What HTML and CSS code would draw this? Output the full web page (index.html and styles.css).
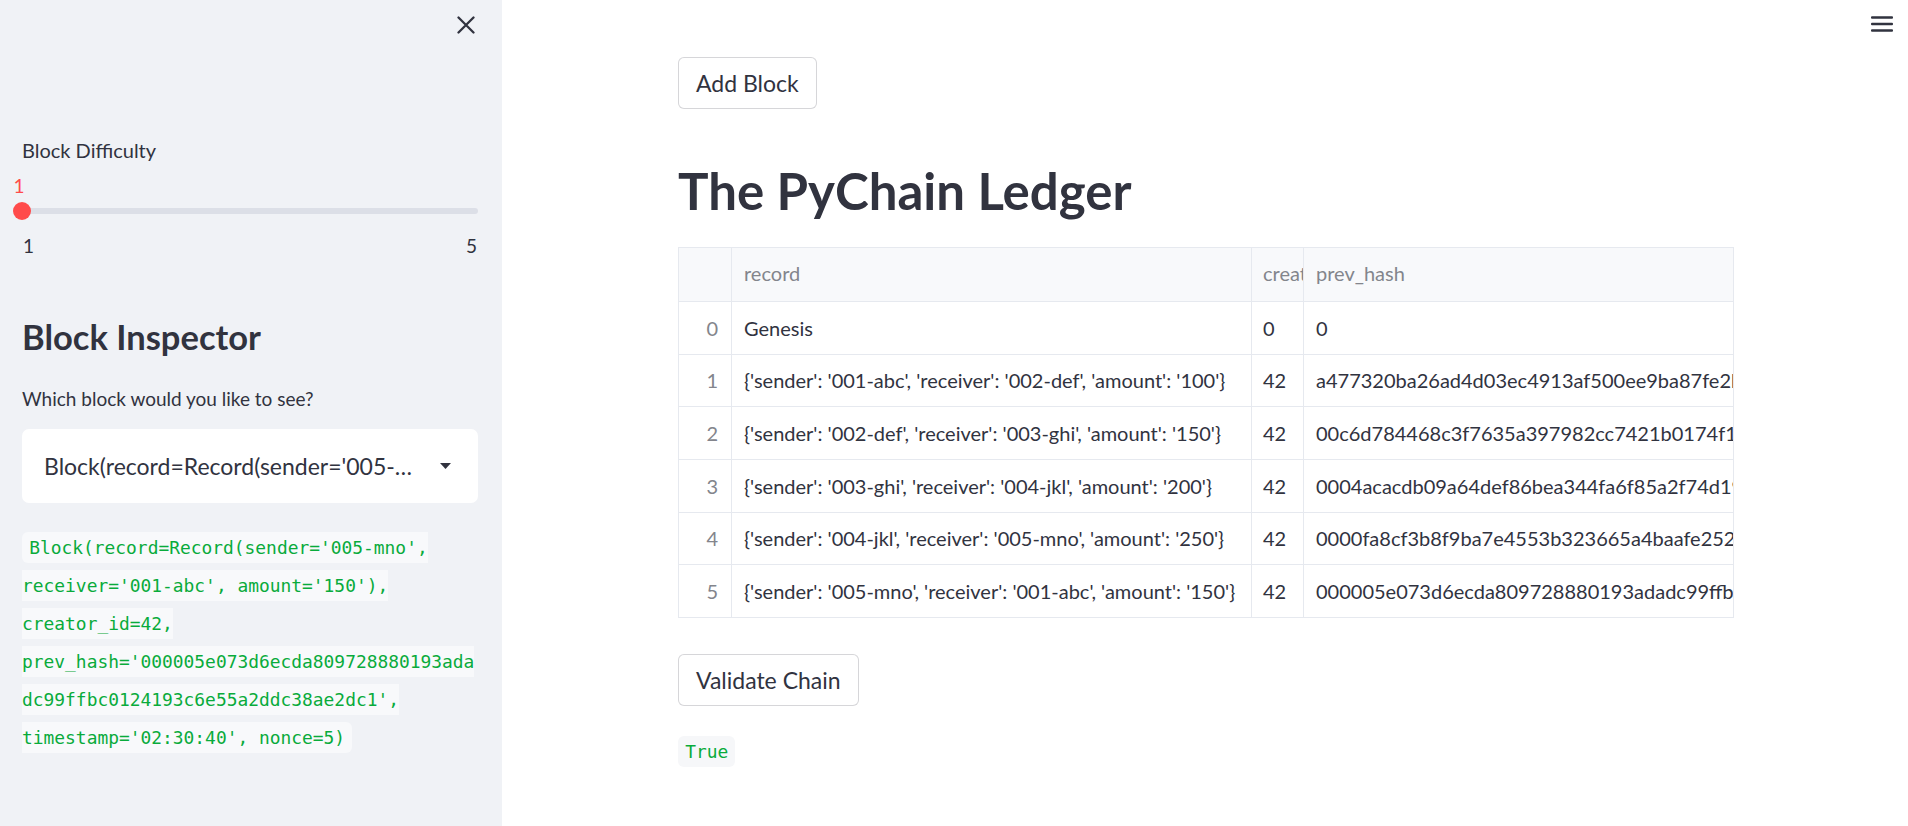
FILE: index.html
```html
<!DOCTYPE html>
<html lang="en">
<head>
<meta charset="utf-8">
<title>PyChain</title>
<link rel="stylesheet" href="styles.css">
</head>
<body>
<div class="app">
  <aside class="sidebar">
    <div class="sidebar-top">
      <button class="icon-btn" aria-label="Close sidebar">
        <svg class="close-icon" width="18" height="18" viewBox="0 0 18 18"><path d="M1.5 1.5 L16.5 16.5 M16.5 1.5 L1.5 16.5" stroke="#31333f" stroke-width="2.3" stroke-linecap="round" fill="none"/></svg>
      </button>
    </div>
    <div class="sidebar-body">
      <div class="slider">
        <label class="widget-label">Block Difficulty</label>
        <div class="slider-track-wrap">
          <div class="slider-track"></div>
          <div class="slider-thumb"><span class="thumb-value">1</span></div>
        </div>
        <div class="slider-ticks"><span>1</span><span>5</span></div>
      </div>
      <h2 class="sb-heading">Block Inspector</h2>
      <label class="widget-label select-label">Which block would you like to see?</label>
      <div class="select">
        <span class="select-value">Block(record=Record(sender='005-…</span>
        <svg class="caret" width="11" height="6" viewBox="0 0 11 6"><path d="M0 0 H11 L5.5 6 Z" fill="#31333f"/></svg>
      </div>
      <p class="code-para"><code class="inline-code">Block(record=Record(sender='005-mno', receiver='001-abc', amount='150'), creator_id=42, prev_hash='000005e073d6ecda809728880193adadc99ffbc0124193c6e55a2ddc38ae2dc1', timestamp='02:30:40', nonce=5)</code></p>
    </div>
  </aside>
  <main class="main">
    <header class="app-header">
      <button class="icon-btn" aria-label="Menu">
        <svg width="22" height="16" viewBox="0 0 22 16"><rect x="0" y="0.3" width="22" height="2.4" rx="1" fill="#31333f"/><rect x="0" y="6.8" width="22" height="2.4" rx="1" fill="#31333f"/><rect x="0" y="13.3" width="22" height="2.4" rx="1" fill="#31333f"/></svg>
      </button>
    </header>
    <div class="content">
      <div class="btn-row"><button class="btn">Add Block</button></div>
      <h1 class="title">The PyChain Ledger</h1>
      <div class="grid">
        <div class="grid-row grid-head">
          <div class="cell c-idx"></div>
          <div class="cell c-rec">record</div>
          <div class="cell c-cre">creator_id</div>
          <div class="cell c-hash">prev_hash</div>
        </div>
        <div class="grid-row">
          <div class="cell c-idx">0</div>
          <div class="cell c-rec">Genesis</div>
          <div class="cell c-cre">0</div>
          <div class="cell c-hash">0</div>
        </div>
        <div class="grid-row">
          <div class="cell c-idx">1</div>
          <div class="cell c-rec">{'sender': '001-abc', 'receiver': '002-def', 'amount': '100'}</div>
          <div class="cell c-cre">42</div>
          <div class="cell c-hash">a477320ba26ad4d03ec4913af500ee9ba87fe2b80c5d1e7f3a9b2c64d8e0f1a3</div>
        </div>
        <div class="grid-row">
          <div class="cell c-idx">2</div>
          <div class="cell c-rec">{'sender': '002-def', 'receiver': '003-ghi', 'amount': '150'}</div>
          <div class="cell c-cre">42</div>
          <div class="cell c-hash">00c6d784468c3f7635a397982cc7421b0174f1a2e8b3d5c7a9e1f0b2d4c6a8e0</div>
        </div>
        <div class="grid-row">
          <div class="cell c-idx">3</div>
          <div class="cell c-rec">{'sender': '003-ghi', 'receiver': '004-jkl', 'amount': '200'}</div>
          <div class="cell c-cre">42</div>
          <div class="cell c-hash">0004acacdb09a64def86bea344fa6f85a2f74d19c0e3b5a7d9f1c2e4b6a8d0f2</div>
        </div>
        <div class="grid-row">
          <div class="cell c-idx">4</div>
          <div class="cell c-rec">{'sender': '004-jkl', 'receiver': '005-mno', 'amount': '250'}</div>
          <div class="cell c-cre">42</div>
          <div class="cell c-hash">0000fa8cf3b8f9ba7e4553b323665a4baafe2523c0d7e9f1a3b5c7d9e1f3a5b7</div>
        </div>
        <div class="grid-row">
          <div class="cell c-idx">5</div>
          <div class="cell c-rec">{'sender': '005-mno', 'receiver': '001-abc', 'amount': '150'}</div>
          <div class="cell c-cre">42</div>
          <div class="cell c-hash">000005e073d6ecda809728880193adadc99ffbc0124193c6e55a2ddc38ae2dc1</div>
        </div>
      </div>
      <div class="btn-row validate-row"><button class="btn">Validate Chain</button></div>
      <p class="code-para result"><code class="inline-code main-code">True</code></p>
    </div>
  </main>
</div>
</body>
</html>
```
FILE: styles.css
```css
* { box-sizing: border-box; }
html, body { margin: 0; padding: 0; }
body {
  font-family: Lato, "Noto Sans", sans-serif;
  color: #31333f;
  background: #ffffff;
}
.app { display: flex; height: 826px; overflow: hidden; }

/* Sidebar */
.sidebar { flex: none; width: 502px; background: #f0f2f6; }
.sidebar-top { display: flex; justify-content: flex-end; padding: 16px 27px 0 0; height: 34px; }
.icon-btn { border: 0; background: none; padding: 0; margin: 0; display: block; line-height: 0; cursor: pointer; }
.sidebar-body { padding: 100px 24px 0 22px; }
.widget-label { display: block; font-size: 20px; line-height: 32px; }

.slider-track-wrap { position: relative; height: 18px; margin-top: 36px; display: flex; align-items: center; }
.slider-track { width: 100%; height: 6px; border-radius: 3px; background: #dcdfe7; }
.slider-thumb { position: absolute; left: -9px; top: 0; width: 18px; height: 18px; border-radius: 50%; background: #ff4b4b; }
.thumb-value {
  position: absolute; left: 50%; bottom: calc(100% + 7px);
  transform: translateX(-50%); margin-left: -3px;
  color: #ff4b4b; font-size: 19px; line-height: 19px;
}
.slider-ticks { display: flex; justify-content: space-between; margin-top: 16px; padding: 0 1px; font-size: 19px; line-height: 20px; }

.sb-heading { margin: 60px 0 0; font-size: 34.5px; font-weight: 700; line-height: 41px; }
.select-label { margin-top: 26px; font-size: 19px; }
.select {
  margin-top: 14px; height: 74px; background: #ffffff; border-radius: 7px;
  display: flex; align-items: center; padding: 0 27px 0 22px;
}
.select-value { flex: 1; font-size: 23px; white-space: nowrap; overflow: hidden; }
.caret { flex: none; display: block; }

.code-para {
  margin: 26px 0 0;
  font-family: "DejaVu Sans Mono", monospace;
  font-size: 17.9px; line-height: 38px;
  overflow-wrap: break-word;
}
.inline-code {
  font-family: inherit; color: #09ab3b; background: #f8f9fb;
  padding: 0.26em 0.4em; border-radius: 6px;
}

/* Main */
.main { flex: 1; position: relative; overflow: hidden; padding: 57px 0 0 176px; }
.app-header { position: absolute; top: 16px; right: 15px; }
.content { width: 1056px; }
.btn-row { display: flex; }
.btn {
  display: inline-flex; align-items: center; height: 52px; padding: 0 17px;
  border: 1px solid rgba(49, 51, 63, 0.2); border-radius: 6px; background: #ffffff;
  font-family: inherit; font-size: 23px; color: #31333f;
}
.title { margin: 51px 0 0; font-size: 51px; font-weight: 700; line-height: 61px; }

.grid { margin-top: 26px; width: 1056px; border: 1px solid #e6e9ef; overflow: hidden; }
.grid-row { display: flex; height: 52.67px; border-bottom: 1px solid #e6e9ef; }
.grid-row:last-child { border-bottom: 0; height: 51.67px; }
.grid-head { height: 54px; background: #f8f9fb; color: #83858c; }
.grid-head .cell { padding-bottom: 3px; }
.cell {
  flex: none; display: flex; align-items: center; padding: 0 11px 0 12px;
  border-right: 1px solid #e6e9ef; white-space: nowrap; overflow: hidden; font-size: 20px;
}
.c-idx { width: 53px; justify-content: flex-end; padding-right: 13px; color: #83858c; }
.c-rec { width: 520px; }
.c-cre { width: 52px; padding-left: 11px; padding-right: 0; }
.c-hash { width: 700px; border-right: 0; }

.validate-row { margin-top: 36px; }
.result { margin-top: 27px; }
.main-code { background: #f6f7f9; }
```
